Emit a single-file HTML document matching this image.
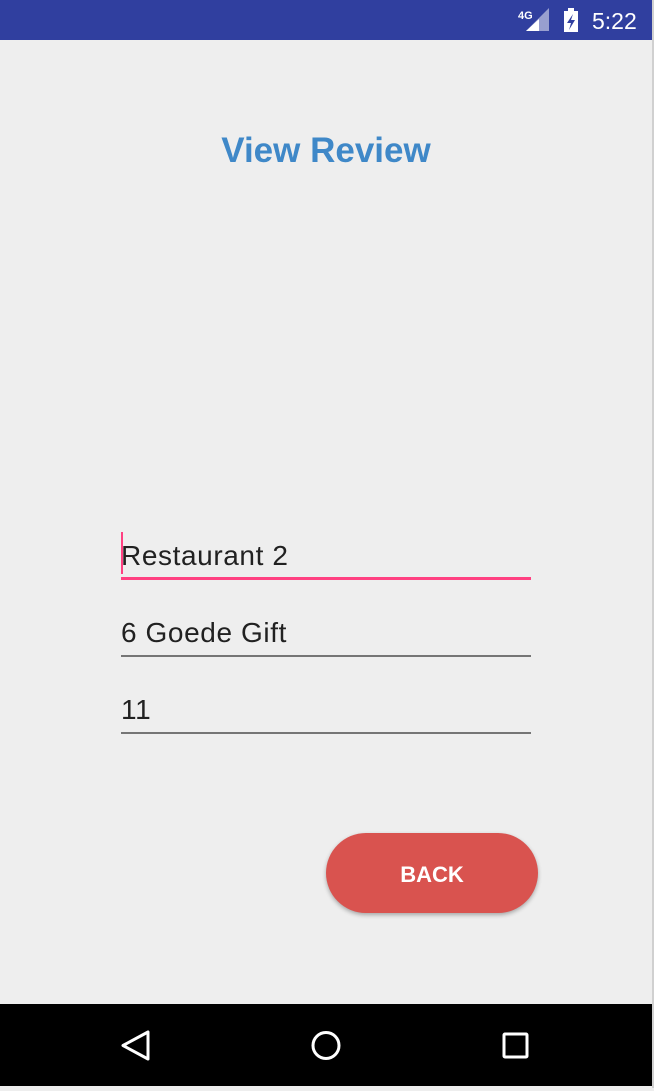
<!DOCTYPE html>
<html><head><style>
body{margin:0;width:654px;height:1088px;background:#eeeeee;position:relative;overflow:hidden;font-family:"Liberation Sans",sans-serif}
.sb{position:absolute;left:0;top:0;width:652px;height:40px;background:#303f9f}
.nav{position:absolute;left:0;top:1004px;width:652px;height:82px;background:#000}
.edge{position:absolute;right:0;top:0;width:2px;height:1088px;background:#d0d0d0}
h1{position:absolute;left:0;width:652px;top:131px;margin:0;text-align:center;color:#3f88c8;font-size:35px;font-weight:bold}
.f{position:absolute;left:121px;width:410px;font-size:28px;letter-spacing:0.6px;color:#212121}
.line{position:absolute;left:121px;width:410px;height:2px;background:#757575}
.btn{position:absolute;left:326px;top:833px;width:212px;height:80px;border-radius:40px;background:#d9534f;color:#fff;font-weight:bold;font-size:22px;text-align:center;line-height:84px;box-shadow:0 2px 4px rgba(0,0,0,.3)}
</style></head><body>
<div class="sb">
<svg style="position:absolute;left:518px;top:5px" width="130" height="30">
<text x="0" y="14" fill="#fff" font-size="11" font-weight="bold" font-family="Liberation Sans">4G</text>
<polygon points="8,26 31,26 31,3" fill="#fff" opacity=".5"/>
<polygon points="8,26 21,26 21,14" fill="#fff"/>
<rect x="46" y="6" width="14" height="21" fill="#fff"/><rect x="50" y="3" width="6" height="4" fill="#fff"/>
<polygon points="55,9 49,18 53,18 51,25 57,15 53,15" fill="#303f9f"/>
<text x="74" y="24" fill="#fff" font-size="23" font-family="Liberation Sans">5:22</text>
</svg></div>
<h1>View Review</h1>
<div style="position:absolute;left:121px;top:532px;width:2px;height:42px;background:#ff4081"></div>
<div class="f" style="top:540px">Restaurant 2</div>
<div class="line" style="top:577px;height:3px;background:#ff4081"></div>
<div class="f" style="top:617px">6 Goede Gift</div>
<div class="line" style="top:655px"></div>
<div class="f" style="top:694px">11</div>
<div class="line" style="top:732px"></div>
<div class="btn">BACK</div>
<div class="nav">
<svg width="652" height="82">
<polygon points="148,28 148,55 123,41.5" fill="none" stroke="#fff" stroke-width="3" stroke-linejoin="round"/>
<circle cx="326" cy="41.5" r="13" fill="none" stroke="#fff" stroke-width="3"/>
<rect x="504" y="30" width="23" height="23" fill="none" stroke="#fff" stroke-width="3" rx="1"/>
</svg></div>
<div class="edge"></div>
</body></html>
